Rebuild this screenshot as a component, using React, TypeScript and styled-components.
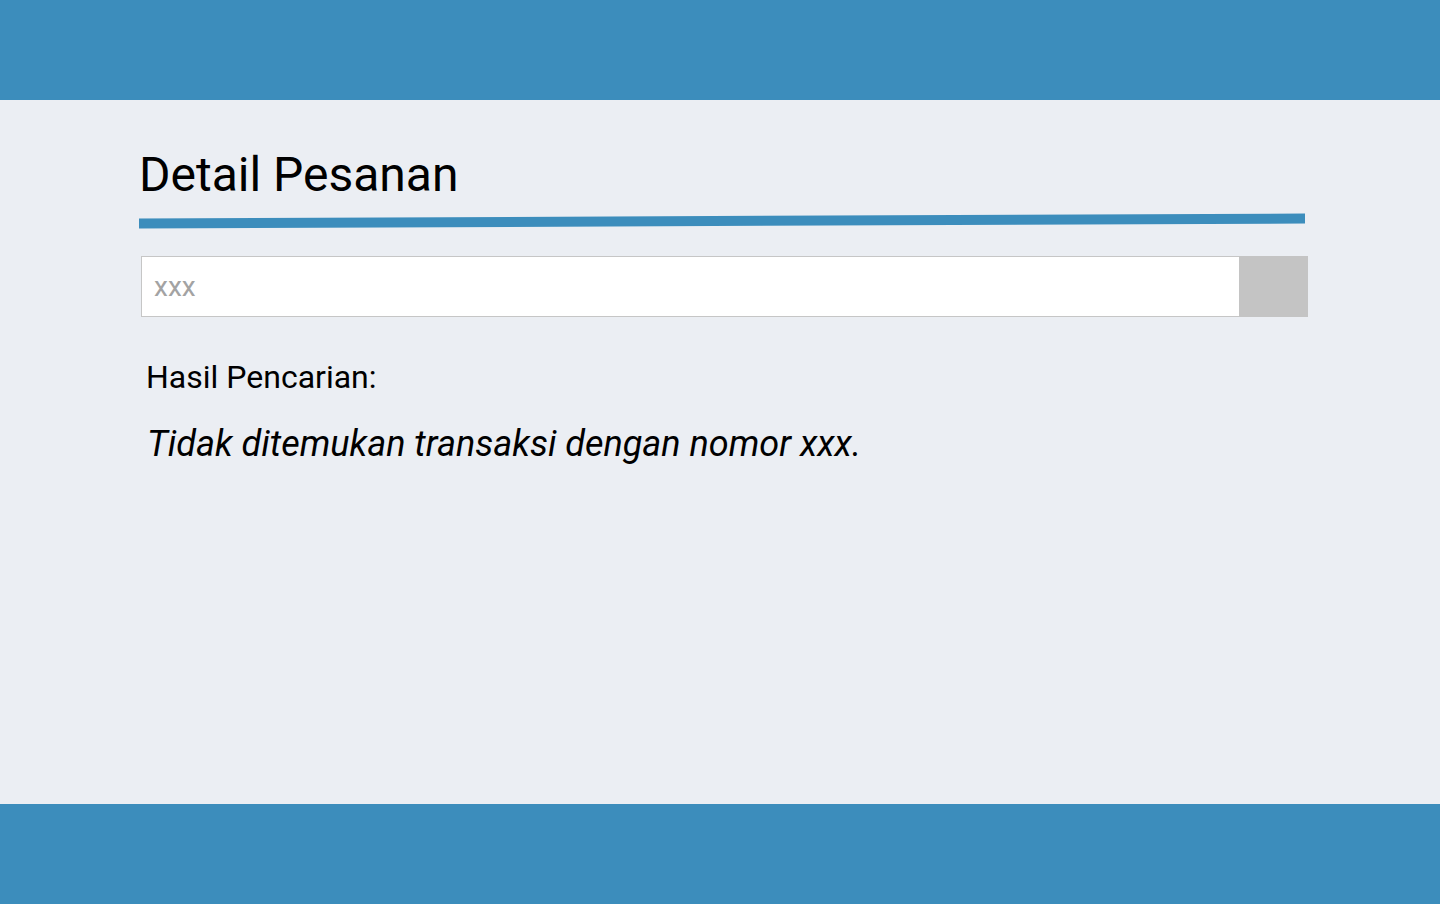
import React from "react";
import styled, { createGlobalStyle } from "styled-components";

const Global = createGlobalStyle`
  html, body { margin: 0; padding: 0; }
  body { font-family: Roboto, "Noto Sans", sans-serif; background: #ebeef3; }
`;

const Page = styled.div`
  display: flex;
  flex-direction: column;
  height: 904px;
  background: #ebeef3;
`;

const Bar = styled.div`
  height: 100px;
  flex: 0 0 100px;
  background: #3c8dbc;
`;

const Main = styled.main`
  flex: 1;
  padding: 49px 132px 0 139px;
`;

const Title = styled.h1`
  margin: 0;
  font-weight: 400;
  font-size: 48px;
  line-height: 52px;
  color: #000;
`;

const Rule = styled.div`
  margin-top: 15px;
  width: 1166px;
  height: 10px;
  background: #3c8dbc;
  transform: rotate(-0.245deg);
`;

const SearchRow = styled.div`
  display: flex;
  margin: 30px 0 0 2px;
  width: 1167px;
  height: 61px;
`;

const Input = styled.input`
  flex: 1;
  box-sizing: border-box;
  height: 61px;
  border: 1px solid #c6c6c6;
  border-right: none;
  background: #fff;
  padding: 0 12px;
  font-family: Roboto, sans-serif;
  font-size: 28px;
  color: #333;
  outline: none;
  &::placeholder { color: #a3a3a3; }
`;

const Button = styled.button`
  width: 69px;
  height: 61px;
  border: none;
  background: #c4c4c4;
  padding: 0;
`;

const Label = styled.p`
  margin: 42px 0 0 7px;
  font-size: 32px;
  line-height: 36px;
  color: #000;
`;

const Result = styled.p`
  margin: 27px 0 0 8px;
  font-size: 36px;
  font-style: italic;
  line-height: 44px;
  color: #000;
`;

export default function App() {
  return (
    <Page>
      <Global />
      <Bar />
      <Main>
        <Title>Detail Pesanan</Title>
        <Rule />
        <SearchRow>
          <Input placeholder="xxx" />
          <Button aria-label="Cari" />
        </SearchRow>
        <Label>Hasil Pencarian:</Label>
        <Result>Tidak ditemukan transaksi dengan nomor xxx.</Result>
      </Main>
      <Bar />
    </Page>
  );
}
